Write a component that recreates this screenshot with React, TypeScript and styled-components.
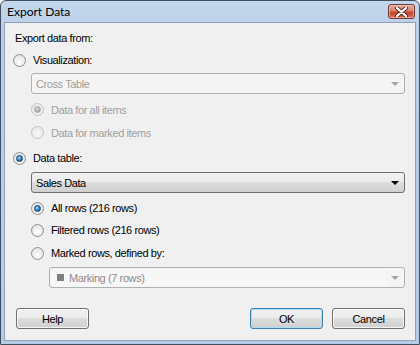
import React from 'react';
import styled, { createGlobalStyle, css } from 'styled-components';

const GlobalStyle = createGlobalStyle`
  html, body {
    margin: 0;
    padding: 0;
    background: #ffffff;
  }
  body {
    font-family: "Liberation Sans", Arial, sans-serif;
    font-size: 11px;
    letter-spacing: -0.4px;
  }
`;

const Window = styled.div`
  width: 420px;
  height: 345px;
  box-sizing: border-box;
  border: 1px solid #414e5c;
  border-radius: 6px 6px 0 0;
  background: linear-gradient(#c3d6ec, #b8cfe8 40px, #b4cce6);
  display: flex;
  flex-direction: column;
  overflow: hidden;
`;

const TitleBar = styled.div`
  height: 21px;
  display: flex;
  align-items: flex-start;
  justify-content: space-between;
  padding: 0 4px 0 6px;
`;

const Title = styled.span`
  font-family: Lato, "Liberation Sans", sans-serif;
  font-size: 12px;
  letter-spacing: 0;
  color: #000;
  line-height: 22px;
`;

const CloseButton = styled.div`
  width: 27px;
  height: 15px;
  margin-top: 3px;
  box-sizing: border-box;
  border: 1px solid #6d3a33;
  border-radius: 3px;
  background: linear-gradient(#e6a898, #d48571 45%, #c4452d 55%, #d66c51);
  box-shadow: inset 0 0 0 1px rgba(255, 210, 200, 0.55);
  display: flex;
  align-items: center;
  justify-content: center;
`;

const Client = styled.div`
  flex: 1;
  margin: 0 3px 3px 3px;
  border: 1px solid #8ea3bb;
  background: #f0f0f0;
  display: flex;
  flex-direction: column;
  padding: 4px 10px 0 8px;
`;

const Row = styled.div<{ $h?: number; $mt?: number; $ml?: number }>`
  height: ${(p) => p.$h ?? 22}px;
  margin-top: ${(p) => p.$mt ?? 0}px;
  margin-left: ${(p) => p.$ml ?? 0}px;
  display: flex;
  align-items: center;
`;

const Label = styled.span<{ $disabled?: boolean }>`
  color: ${(p) => (p.$disabled ? '#a0a0a0' : '#000')};
  white-space: nowrap;
`;

const RadioCircle = styled.span<{ $checked?: boolean; $disabled?: boolean }>`
  width: 13px;
  height: 13px;
  box-sizing: border-box;
  border-radius: 50%;
  border: 1px solid ${(p) => (p.$disabled ? '#c4c4c4' : '#8e8f8f')};
  background: ${(p) =>
    p.$disabled
      ? 'radial-gradient(circle at 50% 60%, #f7f7f7, #e4e4e4)'
      : 'radial-gradient(circle at 50% 65%, #ffffff, #d9dadb)'};
  display: flex;
  align-items: center;
  justify-content: center;
  margin-right: 7px;
  flex-shrink: 0;

  &::after {
    content: '';
    width: 5px;
    height: 5px;
    border-radius: 50%;
    display: ${(p) => (p.$checked ? 'block' : 'none')};
    ${(p) =>
      p.$disabled
        ? css`
            background: radial-gradient(circle at 40% 35%, #e0e0e0, #8c8c8c);
            border: 1px solid #a5a5a5;
          `
        : css`
            background: radial-gradient(circle at 40% 35%, #a7e1ff, #1b78c4 60%, #0b4b86);
            border: 1px solid #1a3f6a;
          `}
  }
`;

const Combo = styled.div<{ $disabled?: boolean; $ml?: number; $mt?: number }>`
  height: 21px;
  box-sizing: border-box;
  margin-left: ${(p) => p.$ml ?? 0}px;
  margin-top: ${(p) => p.$mt ?? 0}px;
  border-radius: 3px;
  display: flex;
  align-items: center;
  padding-left: 4px;
  ${(p) =>
    p.$disabled
      ? css`
          border: 1px solid #adb2b5;
          background: #f4f4f4;
          color: #a0a0a0;
        `
      : css`
          border: 1px solid #707070;
          background: linear-gradient(#f2f2f2 0%, #ebebeb 45%, #dddddd 50%, #cfcfcf 100%);
          color: #000;
        `}
`;

const ComboText = styled.span`
  flex: 1;
  display: flex;
  align-items: center;
  white-space: nowrap;
`;

const ComboField = styled.div`
  flex: 1;
  align-self: stretch;
  margin: 1px 0 1px -3px;
  padding-left: 6px;
  background: #f7f7f7;
  display: flex;
  align-items: center;
  color: #8c8c8c;
`;

const Swatch = styled.span`
  width: 7px;
  height: 7px;
  background: #7f7f7f;
  margin-right: 5px;
`;

const Arrow = styled.span<{ $disabled?: boolean }>`
  width: 18px;
  display: flex;
  justify-content: center;
  align-items: center;

  &::before {
    content: '';
    border-left: 4px solid transparent;
    border-right: 4px solid transparent;
    border-top: 4px solid ${(p) => (p.$disabled ? '#a7a7a7' : '#000')};
  }
`;

const ButtonBar = styled.div`
  margin-top: 20px;
  display: flex;
  align-items: center;
  padding-left: 3px;
`;

const Spacer = styled.div`
  flex: 1;
`;

const Button = styled.div<{ $default?: boolean }>`
  width: 73px;
  height: 21px;
  box-sizing: border-box;
  border-radius: 3px;
  border: 1px solid ${(p) => (p.$default ? '#3c7fb1' : '#707070')};
  background: linear-gradient(#f2f2f2 0%, #ebebeb 45%, #dddddd 50%, #cfcfcf 100%);
  box-shadow: inset 0 0 0 1px ${(p) => (p.$default ? '#a9def6' : 'rgba(255,255,255,0.75)')};
  display: flex;
  align-items: center;
  justify-content: center;
  color: #000;
  font-size: 11px;
  margin-left: ${(p) => (p.$default ? 0 : 9)}px;

  &:first-child {
    margin-left: 0;
  }
`;

function Radio({
  label,
  checked,
  disabled,
}: {
  label: string;
  checked?: boolean;
  disabled?: boolean;
}) {
  return (
    <>
      <RadioCircle $checked={checked} $disabled={disabled} />
      <Label $disabled={disabled}>{label}</Label>
    </>
  );
}

function CloseGlyph() {
  return (
    <svg width="13" height="10" viewBox="0 0 13 10">
      <path
        d="M2 1 L11 9 M11 1 L2 9"
        stroke="#5a2a22"
        strokeWidth="4"
        strokeLinecap="round"
      />
      <path
        d="M2 1 L11 9 M11 1 L2 9"
        stroke="#ffffff"
        strokeWidth="2.2"
        strokeLinecap="round"
      />
    </svg>
  );
}

export default function App() {
  return (
    <>
      <GlobalStyle />
      <Window>
        <TitleBar>
          <Title>Export Data</Title>
          <CloseButton>
            <CloseGlyph />
          </CloseButton>
        </TitleBar>
        <Client>
          <Row $ml={2}>
            <Label>Export data from:</Label>
          </Row>
          <Row>
            <Radio label="Visualization:" />
          </Row>
          <Combo $disabled $ml={18} $mt={2}>
            <ComboText>Cross Table</ComboText>
            <Arrow $disabled />
          </Combo>
          <Row $h={23} $mt={4} $ml={18}>
            <Radio label="Data for all items" checked disabled />
          </Row>
          <Row $h={23} $ml={18}>
            <Radio label="Data for marked items" disabled />
          </Row>
          <Row $mt={3}>
            <Radio label="Data table:" checked />
          </Row>
          <Combo $ml={18} $mt={3}>
            <ComboText>Sales Data</ComboText>
            <Arrow />
          </Combo>
          <Row $mt={4} $ml={18}>
            <Radio label="All rows (216 rows)" checked />
          </Row>
          <Row $ml={18}>
            <Radio label="Filtered rows (216 rows)" />
          </Row>
          <Row $mt={1} $ml={18}>
            <Radio label="Marked rows, defined by:" />
          </Row>
          <Combo $disabled $ml={36} $mt={3}>
            <ComboField>
              <Swatch />
              Marking (7 rows)
            </ComboField>
            <Arrow $disabled />
          </Combo>
          <ButtonBar>
            <Button>Help</Button>
            <Spacer />
            <Button $default>OK</Button>
            <Button>Cancel</Button>
          </ButtonBar>
        </Client>
      </Window>
    </>
  );
}
